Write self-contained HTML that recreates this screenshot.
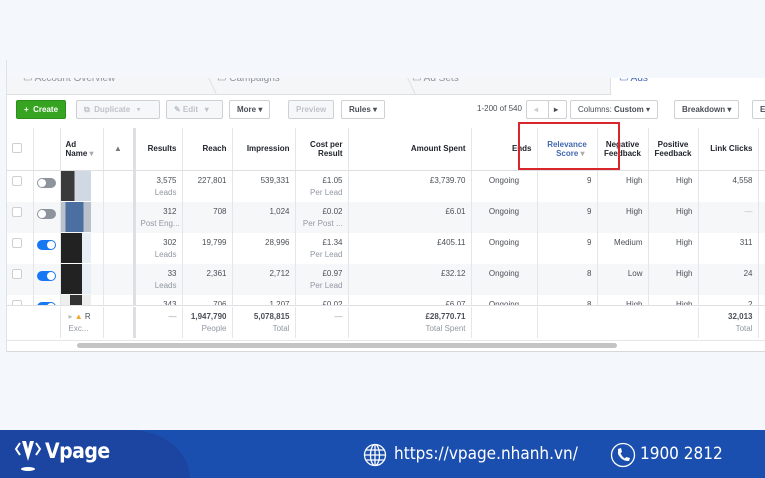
<!DOCTYPE html>
<html><head><meta charset="utf-8"><style>
*{box-sizing:border-box;margin:0;padding:0}
body{width:765px;height:478px;overflow:hidden;background:#f4f8fc;font-family:"Liberation Sans",Arial,sans-serif;position:relative;color:#1d2129}
.panel{position:absolute;left:6px;top:60px;width:760px;height:292px;background:#fff;border-left:1px solid #dfe1e5;border-bottom:1px solid #d6d8dc;overflow:hidden}
.tabs{position:absolute;left:0;top:0;width:760px;height:35px;background:#f5f6f7;border-bottom:1px solid #dddfe2}
.cover{position:absolute;left:-6px;top:0;width:772px;height:18px;background:#f4f8fc}
.tab{position:absolute;top:12px;font-size:10px;color:#90949c}
.tb{position:absolute;top:40px;height:19px;border:1px solid #ced0d4;border-radius:2px;background:#f6f7f9;font-size:8px;font-weight:bold;color:#4b4f56;line-height:17px;padding:0 7px}
.dis{color:#bec3c9}
table{border-collapse:collapse;table-layout:fixed;position:absolute;left:0}
td{border-right:1px solid #e5e6e9;font-size:8px;color:#4b4f56;text-align:right;padding:0 5px;vertical-align:top;white-space:nowrap;overflow:hidden}
.hd td{height:42px;vertical-align:middle;font-weight:bold;color:#1d2129;border-bottom:1px solid #dddfe2}
.r td{height:31px;padding-top:5px}
.r:nth-child(even) td{background:#f6f7f9}
.s{display:block;color:#9197a3;margin-top:3px}
.tog{display:inline-block;width:19px;height:10px;border-radius:6px;background:#8d949e;position:relative;margin-top:2px}
.tog:after{content:"";position:absolute;top:1px;left:1px;width:8px;height:8px;border-radius:50%;background:#fff}
.on{background:#1877f2}.on:after{left:10px}
.cb{display:inline-block;width:10px;height:10px;border:1px solid #ccd0d5;border-radius:2px;background:#fff}
.th{display:block;width:30px;height:30px;background:linear-gradient(90deg,#3a3a3a 0 45%,#cfd8e3 45%);margin-top:-5px}
.bot{position:absolute;left:0;top:430px;width:765px;height:48px;background:#1a4fb0;color:#fff}
</style></head><body>
<div class="panel">
<div class="tabs"></div>
<div class="tab" style="left:16px;top:13px">▭ Account Overview</div>
<div class="tab" style="left:210px;top:13px">▭ Campaigns</div>
<div class="tab" style="left:405px;top:13px">▭ Ad Sets</div>
<div style="position:absolute;left:205px;top:18px;width:1px;height:16px;background:#dddfe2;transform:skewX(25deg)"></div>
<div style="position:absolute;left:404px;top:18px;width:1px;height:16px;background:#dddfe2;transform:skewX(25deg)"></div>
<div style="position:absolute;left:603px;top:18px;width:160px;height:17px;background:#fff;border-left:1px solid #dddfe2"></div>
<div class="tab" style="left:612px;top:13px;color:#4267b2">▭ Ads</div>
<div class="cover"></div>

<div class="tb" style="left:9px;background:#36a420;border-color:#2d8f1b;color:#fff">+&nbsp; Create</div>
<div class="tb dis" style="left:69px;width:84px">⧉&nbsp; Duplicate &nbsp;&nbsp;▾</div>
<div class="tb dis" style="left:159px;width:57px">✎ Edit &nbsp;&nbsp;▾</div>
<div class="tb" style="left:222px;background:#fff">More ▾</div>
<div class="tb dis" style="left:281px">Preview</div>
<div class="tb" style="left:334px;background:#fff">Rules ▾</div>
<div style="position:absolute;left:470px;top:44px;font-size:8px;color:#4b4f56">1-200 of 540</div>
<div class="tb" style="left:519px;width:23px;color:#ccc;background:#fff">◂</div>
<div class="tb" style="left:541px;width:19px;background:#fff;padding:0 5px">▸</div>
<div class="tb" style="left:563px;background:#fff;font-weight:normal">Columns: <b>Custom</b> ▾</div>
<div class="tb" style="left:667px;background:#fff">Breakdown ▾</div>
<div class="tb" style="left:745px;background:#fff">E</div>

<table style="top:68px;width:760px">
<colgroup><col style="width:26px"><col style="width:27px"><col style="width:43px"><col style="width:31px"><col style="width:48px"><col style="width:50px"><col style="width:63px"><col style="width:53px"><col style="width:123px"><col style="width:66px"><col style="width:60px"><col style="width:51px"><col style="width:50px"><col style="width:60px"><col style="width:58px"></colgroup>
<tr class="hd"><td style="text-align:left"><span class="cb"></span></td><td></td><td style="text-align:left">Ad<br>Name <span style="color:#aaa">▾</span></td><td style="text-align:center;color:#777;border-right:3px solid #dddfe2">▲</td><td>Results</td><td>Reach</td><td>Impression</td><td>Cost per<br>Result</td><td>Amount Spent</td><td>Ends</td><td style="color:#4267b2;text-align:center">Relevance<br>&nbsp;&nbsp;&nbsp;Score <span style="color:#aaa">▾</span></td><td style="text-align:center">Negative<br>Feedback</td><td style="text-align:center">Positive<br>Feedback</td><td>Link Clicks</td><td></td></tr>
</table>
<div style="position:absolute;left:0;top:111px;width:760px;height:135px;overflow:hidden;border-bottom:1px solid #dddfe2">
<table style="top:0;width:760px">
<colgroup><col style="width:26px"><col style="width:27px"><col style="width:43px"><col style="width:31px"><col style="width:48px"><col style="width:50px"><col style="width:63px"><col style="width:53px"><col style="width:123px"><col style="width:66px"><col style="width:60px"><col style="width:51px"><col style="width:50px"><col style="width:60px"><col style="width:58px"></colgroup>
<tr class="r"><td style="text-align:left"><span class="cb"></span></td><td style="text-align:left;padding-left:3px"><span class="tog"></span></td><td style="text-align:left;padding-left:0"><span class="th"></span></td><td style="border-right:3px solid #dddfe2"></td><td>3,575<span class="s">Leads</span></td><td>227,801</td><td>539,331</td><td>£1.05<span class="s">Per Lead</span></td><td>£3,739.70</td><td style="text-align:center">Ongoing</td><td>9</td><td>High</td><td>High</td><td>4,558</td><td></td></tr>
<tr class="r"><td style="text-align:left"><span class="cb"></span></td><td style="text-align:left;padding-left:3px"><span class="tog"></span></td><td style="text-align:left;padding-left:0"><span class="th" style="background:linear-gradient(90deg,#b9c2cc 0 15%,#4a6fa0 15% 75%,#b9c2cc 75%)"></span></td><td style="border-right:3px solid #dddfe2"></td><td>312<span class="s">Post Eng...</span></td><td>708</td><td>1,024</td><td>£0.02<span class="s">Per Post ...</span></td><td>£6.01</td><td style="text-align:center">Ongoing</td><td>9</td><td>High</td><td>High</td><td style="color:#bbb">—</td><td></td></tr>
<tr class="r"><td style="text-align:left"><span class="cb"></span></td><td style="text-align:left;padding-left:3px"><span class="tog on"></span></td><td style="text-align:left;padding-left:0"><span class="th" style="background:linear-gradient(90deg,#222 0 70%,#e8eef5 70%)"></span></td><td style="border-right:3px solid #dddfe2"></td><td>302<span class="s">Leads</span></td><td>19,799</td><td>28,996</td><td>£1.34<span class="s">Per Lead</span></td><td>£405.11</td><td style="text-align:center">Ongoing</td><td>9</td><td>Medium</td><td>High</td><td>311</td><td></td></tr>
<tr class="r"><td style="text-align:left"><span class="cb"></span></td><td style="text-align:left;padding-left:3px"><span class="tog on"></span></td><td style="text-align:left;padding-left:0"><span class="th" style="background:linear-gradient(90deg,#222 0 70%,#e8eef5 70%)"></span></td><td style="border-right:3px solid #dddfe2"></td><td>33<span class="s">Leads</span></td><td>2,361</td><td>2,712</td><td>£0.97<span class="s">Per Lead</span></td><td>£32.12</td><td style="text-align:center">Ongoing</td><td>8</td><td>Low</td><td>High</td><td>24</td><td></td></tr>
<tr class="r"><td style="text-align:left"><span class="cb"></span></td><td style="text-align:left;padding-left:3px"><span class="tog on"></span></td><td style="text-align:left;padding-left:0"><span class="th" style="background:linear-gradient(90deg,#eee 0 30%,#333 30% 70%,#eee 70%)"></span></td><td style="border-right:3px solid #dddfe2"></td><td>343</td><td>706</td><td>1,207</td><td>£0.02</td><td>£6.07</td><td style="text-align:center">Ongoing</td><td>8</td><td>High</td><td>High</td><td>2</td><td></td></tr>
</table></div>
<table style="top:247px;width:760px">
<colgroup><col style="width:26px"><col style="width:27px"><col style="width:43px"><col style="width:31px"><col style="width:48px"><col style="width:50px"><col style="width:63px"><col style="width:53px"><col style="width:123px"><col style="width:66px"><col style="width:60px"><col style="width:51px"><col style="width:50px"><col style="width:60px"><col style="width:58px"></colgroup>
<tr class="r"><td style="border-right:none"></td><td></td><td style="text-align:left;padding-left:8px"><span style="color:#bbb">▸</span> <span style="color:#f5a623">▲</span> R<span class="s">Exc...</span></td><td style="border-right:3px solid #dddfe2"></td><td style="color:#999">—</td><td><b>1,947,790</b><span class="s">People</span></td><td><b>5,078,815</b><span class="s">Total</span></td><td style="color:#999">—</td><td><b>£28,770.71</b><span class="s">Total Spent</span></td><td></td><td style="border-right:none"></td><td style="border-right:none"></td><td></td><td><b>32,013</b><span class="s">Total</span></td><td></td></tr>
</table>
<div style="position:absolute;left:0;top:280px;width:760px;height:1px;background:#e5e6e9"></div>
<div style="position:absolute;left:70px;top:283px;width:540px;height:5px;border-radius:3px;background:#c4c4c4"></div>
<div style="position:absolute;left:511px;top:62px;width:102px;height:48px;border:2px solid #d9262c"></div>
</div>

<div class="bot">
<div style="position:absolute;left:0;top:0;width:190px;height:48px;background:#1b45a0;border-top-right-radius:60px 48px"></div>
<svg style="position:absolute;left:14px;top:7px" width="28" height="36" viewBox="0 0 28 36"><path d="M6 6 L2 12 L6 18 M22 6 L26 12 L22 18" stroke="#fff" stroke-width="2" fill="none"/><path d="M8 4 L14 24 L20 4 L16 4 L14 12 L12 4Z" fill="#fff"/><ellipse cx="14" cy="32" rx="7" ry="2" fill="#fff"/></svg>
<div style="position:absolute;left:45px;top:9px;font-size:21px;font-weight:bold;letter-spacing:-0.5px;font-family:'DejaVu Sans Condensed','Liberation Sans',sans-serif">Vpage</div>
<svg style="position:absolute;left:363px;top:13px" width="24" height="24" viewBox="0 0 24 24" fill="none" stroke="#fff" stroke-width="1.3"><circle cx="12" cy="12" r="10.5"/><ellipse cx="12" cy="12" rx="4.5" ry="10.5"/><path d="M1.5 12H22.5M3 7H21M3 17H21M12 1.5V22.5"/></svg>
<div style="position:absolute;left:394px;top:14px;font-size:17px;font-family:'DejaVu Sans Condensed','Liberation Sans',sans-serif">https://vpage.nhanh.vn/</div>
<svg style="position:absolute;left:610px;top:12px" width="26" height="26" viewBox="0 0 26 26"><circle cx="13" cy="13" r="11.5" stroke="#fff" stroke-width="1.3" fill="none"/><path d="M8 7 L11 6 L12 10 L10.5 11 Q12 15 15 16.5 L16 15 L20 16 L19 19 Q12 19.5 8 12 Z" fill="#fff"/></svg>
<div style="position:absolute;left:640px;top:14px;font-size:17px;font-family:'DejaVu Sans Condensed','Liberation Sans',sans-serif">1900 2812</div>
</div>
</body></html>
